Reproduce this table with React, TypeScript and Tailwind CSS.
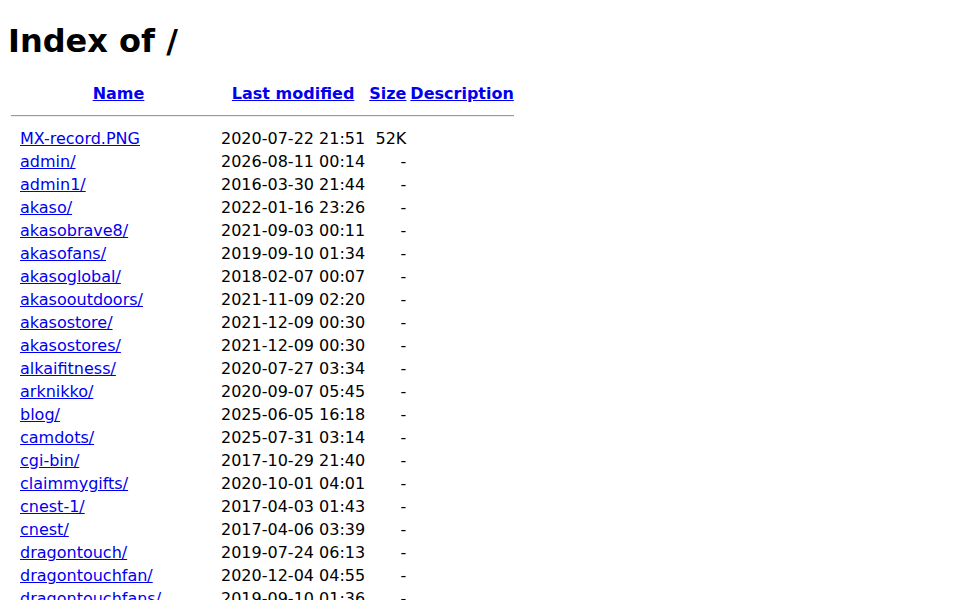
const entries: [string, string, string][] = [
  ["MX-record.PNG", "2020-07-22 21:51", "52K"],
  ["admin/", "2026-08-11 00:14", "-"],
  ["admin1/", "2016-03-30 21:44", "-"],
  ["akaso/", "2022-01-16 23:26", "-"],
  ["akasobrave8/", "2021-09-03 00:11", "-"],
  ["akasofans/", "2019-09-10 01:34", "-"],
  ["akasoglobal/", "2018-02-07 00:07", "-"],
  ["akasooutdoors/", "2021-11-09 02:20", "-"],
  ["akasostore/", "2021-12-09 00:30", "-"],
  ["akasostores/", "2021-12-09 00:30", "-"],
  ["alkaifitness/", "2020-07-27 03:34", "-"],
  ["arknikko/", "2020-09-07 05:45", "-"],
  ["blog/", "2025-06-05 16:18", "-"],
  ["camdots/", "2025-07-31 03:14", "-"],
  ["cgi-bin/", "2017-10-29 21:40", "-"],
  ["claimmygifts/", "2020-10-01 04:01", "-"],
  ["cnest-1/", "2017-04-03 01:43", "-"],
  ["cnest/", "2017-04-06 03:39", "-"],
  ["dragontouch/", "2019-07-24 06:13", "-"],
  ["dragontouchfan/", "2020-12-04 04:55", "-"],
  ["dragontouchfans/", "2019-09-10 01:36", "-"],
];

export default function App() {
  return (
    <div className="min-h-[600px] bg-white px-2 pb-2 pt-[23px] font-['DejaVu_Sans',sans-serif] text-base text-black">
      <h1 className="mb-[21px] text-[32px] font-bold leading-[37px]">Index of /</h1>
      <table className="border-separate border-spacing-[2px]">
        <tbody>
          <tr>
            <th className="w-[7px] p-px"></th>
            <th className="w-[199px] p-px text-center font-bold leading-[19px]">
              <a href="#" className="text-[#0000ee] underline">Name</a>
            </th>
            <th className="p-px text-center font-bold leading-[19px]">
              <a href="#" className="text-[#0000ee] underline">Last modified</a>
            </th>
            <th className="p-px text-center font-bold leading-[19px]">
              <a href="#" className="text-[#0000ee] underline">Size</a>
            </th>
            <th className="p-px text-center font-bold leading-[19px]">
              <a href="#" className="text-[#0000ee] underline">Description</a>
            </th>
          </tr>
          <tr>
            <th colSpan={5} className="p-px">
              <div className="my-2 h-[2px] border-t border-b border-t-[#9a9a9a] border-b-[#eeeeee]"></div>
            </th>
          </tr>
          {entries.map(([name, date, size]) => (
            <tr key={name}>
              <td className="p-px"></td>
              <td className="p-px leading-[19px]">
                <a href="#" className="text-[#0000ee] underline">{name}</a>
              </td>
              <td className="p-px text-right leading-[19px]">{date}</td>
              <td className="p-px text-right leading-[19px]">{size}</td>
              <td className="p-px leading-[19px]">&nbsp;</td>
            </tr>
          ))}
        </tbody>
      </table>
    </div>
  );
}
